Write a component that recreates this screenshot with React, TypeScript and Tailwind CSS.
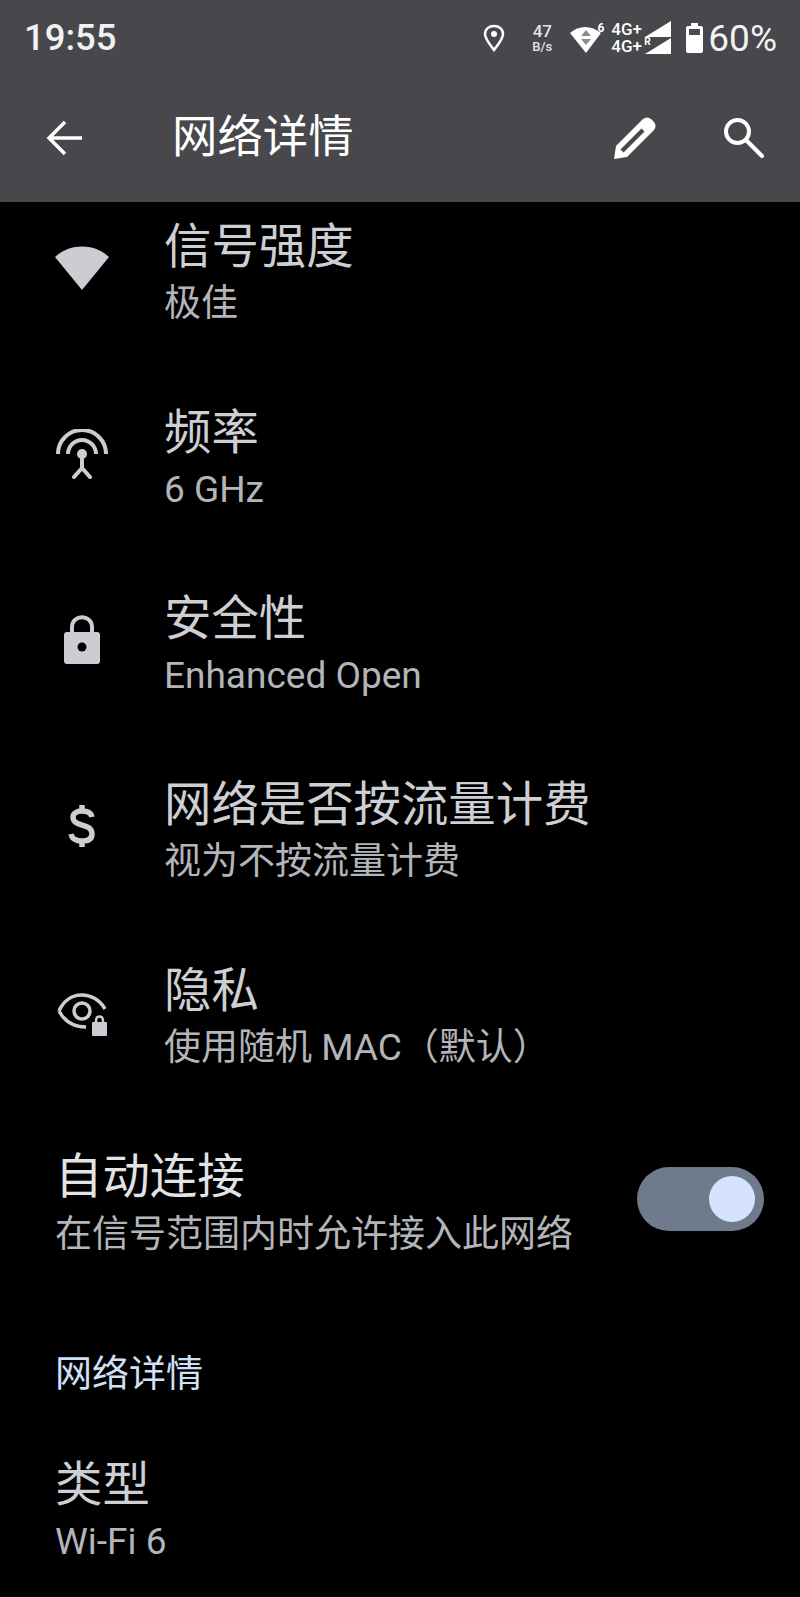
import type { ReactNode } from 'react';

const CJK = '[font-family:Roboto,"Noto_Sans_CJK_SC",sans-serif]';

function WifiFan() {
  return (
    <svg width="56" height="48" viewBox="0 0 56 48">
      <path d="M1 13 C16 -1 40 -1 55 13 L28 46 Z" fill="#cbcdd2" />
    </svg>
  );
}

function Antenna() {
  return (
    <svg width="52" height="50" viewBox="0 0 52 50" fill="none" stroke="#cbcdd2" strokeWidth="4">
      <path d="M2 25 A24 24 0 0 1 50 25" />
      <path d="M12 25 A14 14 0 0 1 40 25" />
      <circle cx="26" cy="25" r="5" fill="#cbcdd2" stroke="none" />
      <path d="M26 28 V39 M26 39 L18 48 M26 39 L34 48" strokeLinecap="round" />
    </svg>
  );
}

function Lock() {
  return (
    <svg width="38" height="50" viewBox="0 0 38 50">
      <path d="M9 18 V12 C9 -1 29 -1 29 12 V18" fill="none" stroke="#cbcdd2" strokeWidth="4" />
      <rect x="1" y="17" width="36" height="32" rx="3" fill="#cbcdd2" />
      <circle cx="19" cy="32" r="4.5" fill="#000" />
    </svg>
  );
}

function Dollar() {
  return (
    <svg width="28" height="44" viewBox="0 0 28 44" fill="none" stroke="#cbcdd2" strokeWidth="5.5">
      <path d="M24 13 C23 8 19 7 14 7 C8 7 5 10 5 13 C5 24 24 18 24 30 C24 35 20 37 14 37 C8 37 4 35 3 30" />
      <path d="M14 1 V7 M14 37 V43" />
    </svg>
  );
}

function EyeLock() {
  return (
    <svg width="50" height="44" viewBox="0 0 50 44" className="mt-[6px]">
      <path d="M2 18 C11 -3 37 -3 48 16 M2 18 C8 29 17 34 29 34" fill="none" stroke="#cbcdd2" strokeWidth="3.5" />
      <circle cx="25" cy="18" r="8" fill="none" stroke="#cbcdd2" strokeWidth="3.5" />
      <path d="M39 30 V28 C39 22 46 22 46 28 V30" fill="none" stroke="#cbcdd2" strokeWidth="2.5" />
      <rect x="35" y="29" width="15" height="14" rx="1" fill="#cbcdd2" />
    </svg>
  );
}

function StatusIcons() {
  return (
    <div className="flex items-center text-white">
      <svg width="22" height="28" viewBox="0 0 22 28" fill="none" stroke="#fff" strokeWidth="2.5" className="mr-[27px]">
        <path d="M11 26 C6 19 2 15 2 10 C2 5 6 2 11 2 C16 2 20 5 20 10 C20 15 16 19 11 26 Z" />
        <circle cx="11" cy="10" r="3" fill="#fff" stroke="none" />
      </svg>
      <div className="flex flex-col items-center mr-[18px] font-medium text-[#e4e4e6]">
        <span className="text-[17px] leading-[17px]">47</span>
        <span className="text-[13px] leading-[13px]">B/s</span>
      </div>
      <div className="relative w-[34px] h-[30px] mr-[7px]">
        <svg width="32" height="28" viewBox="0 0 32 28" className="absolute left-0 top-[2px]">
          <path d="M0 8 C9 0 21 0 31 8 L16 28 Z" fill="#fff" />
          <path d="M16 5 L21 11 H11 Z M11 14 H21 L16 20 Z" fill="#8b8b90" />
        </svg>
        <span className="absolute right-0 -top-[1px] text-[12px] font-bold leading-none">6</span>
      </div>
      <div className="flex flex-col mr-[15px]">
        <div className="relative w-[60px] h-[17px]">
          <span className="absolute left-0 top-0 text-[17px] font-medium leading-[17px]">4G+</span>
          <svg width="26" height="16" viewBox="0 0 26 16" className="absolute right-0 top-0">
            <path d="M0 16 L26 0 V16 Z" fill="#fff" />
          </svg>
        </div>
        <div className="relative w-[60px] h-[17px]">
          <span className="absolute left-0 top-0 text-[17px] font-medium leading-[17px]">4G+</span>
          <span className="absolute left-[33px] -top-[1px] text-[10px] font-bold leading-none">R</span>
          <svg width="26" height="16" viewBox="0 0 26 16" className="absolute right-0 top-0">
            <path d="M0 16 L26 0 V16 Z" fill="#fff" />
          </svg>
        </div>
      </div>
      <svg width="17" height="30" viewBox="0 0 17 30" className="mr-[5px]">
        <path d="M5 0 H12 V3 H15 Q17 3 17 5 V28 Q17 30 15 30 H2 Q0 30 0 28 V5 Q0 3 2 3 H5 Z" fill="#fff" />
        <rect x="3" y="6" width="11" height="6" fill="#4a4a4f" />
      </svg>
      <span className="text-[37px] leading-none text-[#f2f2f3]">60%</span>
    </div>
  );
}

function Row({ icon, title, sub }: { icon: ReactNode; title: string; sub: string }) {
  return (
    <div className="flex items-center h-[186px]">
      <div className="w-[164px] flex justify-center pb-[14px] shrink-0">{icon}</div>
      <div className="flex flex-col">
        <span className="text-[47.4px] leading-[57px] text-[#cdcfd4]">{title}</span>
        <span className="text-[37px] leading-[56px] text-[#b3b5ba]">{sub}</span>
      </div>
    </div>
  );
}

export default function App() {
  return (
    <div className={`w-[800px] h-[1597px] bg-black overflow-hidden ${CJK}`}>
      <header className="bg-[#47474c] h-[202px] flex flex-col">
        <div className="h-[76px] flex items-center justify-between pl-[24px] pr-[23px]">
          <span className="text-[36.5px] font-medium text-[#f2f2f3] leading-none">19:55</span>
          <StatusIcons />
        </div>
        <div className="flex items-center h-[124px] pl-[46px] pr-[36px]">
          <svg width="36" height="36" viewBox="0 0 36 36" fill="none" stroke="#fff" strokeWidth="3.5">
            <path d="M36 18 H3 M19 2 L3 18 L19 34" />
          </svg>
          <h1 className="ml-[90px] text-[45.4px] text-white leading-none font-normal">网络详情</h1>
          <svg width="42" height="42" viewBox="0 0 42 42" className="ml-auto mr-[68px]">
            <path d="M0 42 L2 29 L29 2 Q33 -1 37 2 L40 5 Q43 9 40 13 L13 40 Z" fill="#fff" />
            <path d="M8 34 L29 13" stroke="#47474c" strokeWidth="4.5" />
          </svg>
          <svg width="40" height="40" viewBox="0 0 40 40" fill="none" stroke="#fff" strokeWidth="4">
            <circle cx="13.5" cy="13.5" r="11.5" />
            <path d="M22 22 L38 38" strokeLinecap="round" />
          </svg>
        </div>
      </header>

      <main className="flex flex-col">
        <div className="-mt-[20px]">
          <Row icon={<WifiFan />} title="信号强度" sub="极佳" />
          <Row icon={<Antenna />} title="频率" sub="6 GHz" />
          <Row icon={<Lock />} title="安全性" sub="Enhanced Open" />
          <Row icon={<Dollar />} title="网络是否按流量计费" sub="视为不按流量计费" />
          <Row icon={<EyeLock />} title="隐私" sub="使用随机 MAC（默认）" />
        </div>

        <div className="flex items-center justify-between pl-[55px] pr-[36px] h-[187px]">
          <div className="flex flex-col">
            <span className="text-[47.4px] leading-[57px] text-[#e2e3e6]">自动连接</span>
            <span className="text-[37px] leading-[57px] text-[#b3b5ba]">在信号范围内时允许接入此网络</span>
          </div>
          <div className="w-[127px] h-[64px] mb-[14px] rounded-full bg-[#6f7a8c] flex items-center justify-end pr-[9px]">
            <div className="w-[46px] h-[46px] rounded-full bg-[#d6e3fc]" />
          </div>
        </div>

        <div className="pl-[55px] mt-[51px] text-[37px] leading-[50px] text-[#d0e0f8]">网络详情</div>

        <div className="flex flex-col pl-[55px] mt-[57px]">
          <span className="text-[47.4px] leading-[57px] text-[#cdcfd4]">类型</span>
          <span className="text-[37px] leading-[56px] text-[#b3b5ba]">Wi-Fi 6</span>
        </div>
      </main>
    </div>
  );
}
